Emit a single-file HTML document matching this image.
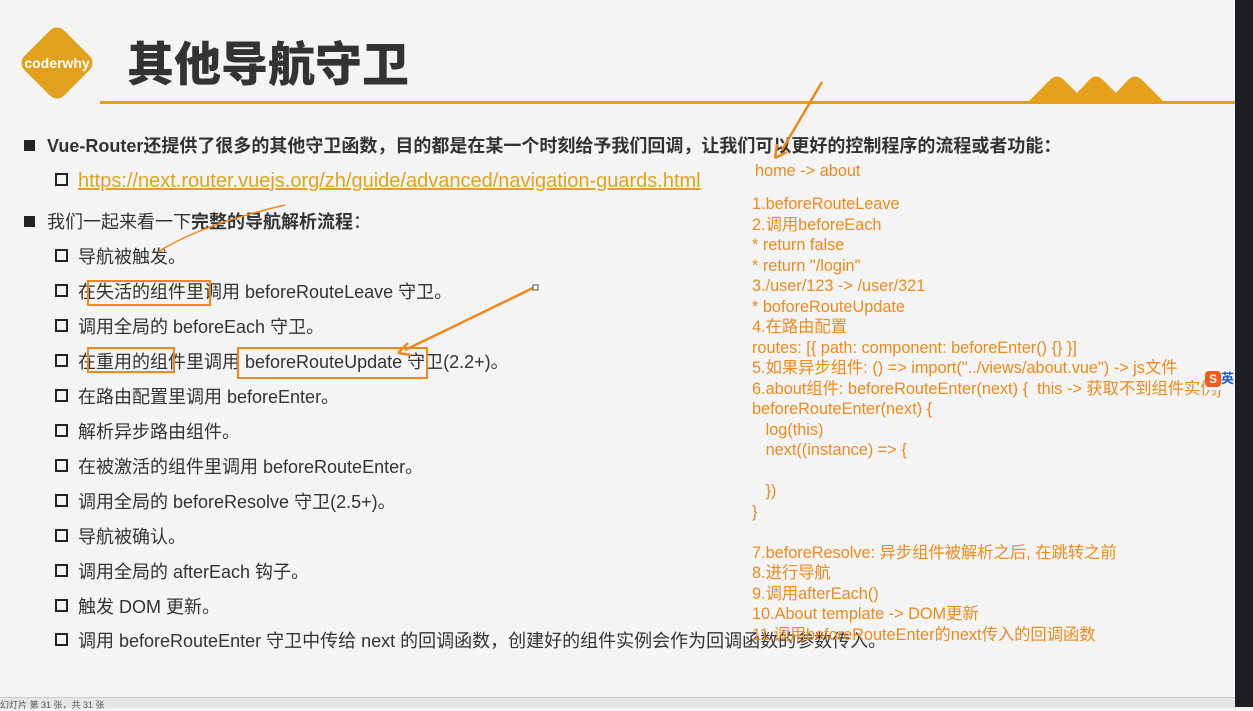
<!DOCTYPE html>
<html><head><meta charset="utf-8"><style>
body{margin:0;width:1253px;height:707px;overflow:hidden;background:#f4f4f4;position:relative;font-family:"Liberation Sans","Noto Sans CJK SC",sans-serif;color:#333}
.a{position:absolute;white-space:nowrap}
.l{font-size:18px;line-height:20px}
.sq{display:inline-block;width:9px;height:9px;border:2px solid #222;margin-right:10px;vertical-align:1px}
.fs{display:inline-block;width:11px;height:11px;background:#222;margin-right:12px;vertical-align:1px}
.r{position:absolute;left:752px;font-size:16.3px;line-height:20.5px;color:#ef8a1c;white-space:pre}
.box{position:absolute;border:2px solid #f0881a}
</style></head><body>
<div class="a" style="left:1235px;top:0;width:18px;height:707px;background:#1e1f22"></div>
<div class="a" style="left:0;top:697px;width:1235px;height:10px;background:#e6e6e6;border-top:1px solid #ccc;font-size:9px;color:#555">幻灯片 第 31 张，共 31 张</div>
<svg class="a" style="left:14px;top:20px" width="86" height="86"><rect x="15" y="15" width="56" height="56" rx="10" transform="rotate(45 43 43)" fill="#e2a11c"/><text x="43" y="48" text-anchor="middle" font-size="14" font-weight="bold" fill="#fff" font-family="Liberation Sans">coderwhy</text></svg>
<div class="a" style="left:127px;top:30px;font-size:47px;font-weight:900;color:#333;line-height:62px;font-family:'Noto Sans CJK SC',sans-serif">其他导航守卫</div>
<div class="a" style="left:100px;top:101px;width:1135px;height:3px;background:#e6a11c"></div>
<svg class="a" style="left:1025px;top:72px" width="160" height="32"><path d="M2 31 L25 8 Q32 1 39 8 L52 21 L64 8 Q71 1 78 8 L91 21 L103 8 Q110 1 117 8 L140 31Z" fill="#e6a11c"/></svg>
<div class="a l" style="left:24px;top:136px;font-weight:bold"><span class="fs"></span>Vue-Router还提供了很多的其他守卫函数，目的都是在某一个时刻给予我们回调，让我们可以更好的控制程序的流程或者功能：</div>
<div class="a l" style="left:55px;top:171px;font-size:20px"><span class="sq"></span><span style="color:#e6a11c;text-decoration:underline">https://next.router.vuejs.org/zh/guide/advanced/navigation-guards.html</span></div>
<div class="a l" style="left:24px;top:212px"><span class="fs"></span>我们一起来看一下<b>完整的导航解析流程</b>：</div>
<div class="a l" style="left:55px;top:247px"><span class="sq"></span>导航被触发。</div>
<div class="a l" style="left:55px;top:282px"><span class="sq"></span>在失活的组件里调用 beforeRouteLeave 守卫。</div>
<div class="a l" style="left:55px;top:317px"><span class="sq"></span>调用全局的 beforeEach 守卫。</div>
<div class="a l" style="left:55px;top:352px"><span class="sq"></span>在重用的组件里调用 beforeRouteUpdate 守卫(2.2+)。</div>
<div class="a l" style="left:55px;top:387px"><span class="sq"></span>在路由配置里调用 beforeEnter。</div>
<div class="a l" style="left:55px;top:422px"><span class="sq"></span>解析异步路由组件。</div>
<div class="a l" style="left:55px;top:457px"><span class="sq"></span>在被激活的组件里调用 beforeRouteEnter。</div>
<div class="a l" style="left:55px;top:492px"><span class="sq"></span>调用全局的 beforeResolve 守卫(2.5+)。</div>
<div class="a l" style="left:55px;top:527px"><span class="sq"></span>导航被确认。</div>
<div class="a l" style="left:55px;top:562px"><span class="sq"></span>调用全局的 afterEach 钩子。</div>
<div class="a l" style="left:55px;top:597px"><span class="sq"></span>触发 DOM 更新。</div>
<div class="a l" style="left:55px;top:631px"><span class="sq"></span>调用 beforeRouteEnter 守卫中传给 next 的回调函数，创建好的组件实例会作为回调函数的参数传入。</div>
<div class="box" style="left:87px;top:280px;width:120px;height:22px"></div>
<div class="box" style="left:87px;top:347px;width:84px;height:22px"></div>
<div class="box" style="left:237px;top:347px;width:187px;height:28px"></div>
<div class="r" style="top:161px;left:755px">home -> about</div>
<div class="r" style="top:194px">1.beforeRouteLeave
2.调用beforeEach
* return false
* return "/login"
3./user/123 -> /user/321
* boforeRouteUpdate
4.在路由配置
routes: [{ path: component: beforeEnter() {} }]
5.如果异步组件: () => import("../views/about.vue") -> js文件
6.about组件: beforeRouteEnter(next) {  this -> 获取不到组件实例}
beforeRouteEnter(next) {
   log(this)
   next((instance) => {

   })
}

7.beforeResolve: 异步组件被解析之后, 在跳转之前
8.进行导航
9.调用afterEach()
10.About template -> DOM更新
11.调用beforeRouteEnter的next传入的回调函数</div>
<svg class="a" style="left:0;top:0" width="1235" height="697"><g stroke="#f0881a" stroke-width="2.5" fill="none"><path d="M822 82 L782 150"/><path d="M775 158 l2 -14 M775 158 l12 -6"/><path d="M535 287 L405 350"/><path d="M398 353 l10 -10 M398 353 l13 2"/><path d="M158 252 Q200 225 285 205" stroke-width="1.5"/></g><rect x="533" y="285" width="5" height="5" fill="#fff" stroke="#555"/></svg>
<div class="a" style="left:1205px;top:368px;width:30px;height:22px;background:#f4f4f4;font-size:13px;color:#1a5dd0;font-weight:bold"><span style="display:inline-block;width:16px;height:16px;border-radius:4px;background:#f25a1a;color:#fff;text-align:center;line-height:16px;font-size:12px">S</span>英</div>
</body></html>
